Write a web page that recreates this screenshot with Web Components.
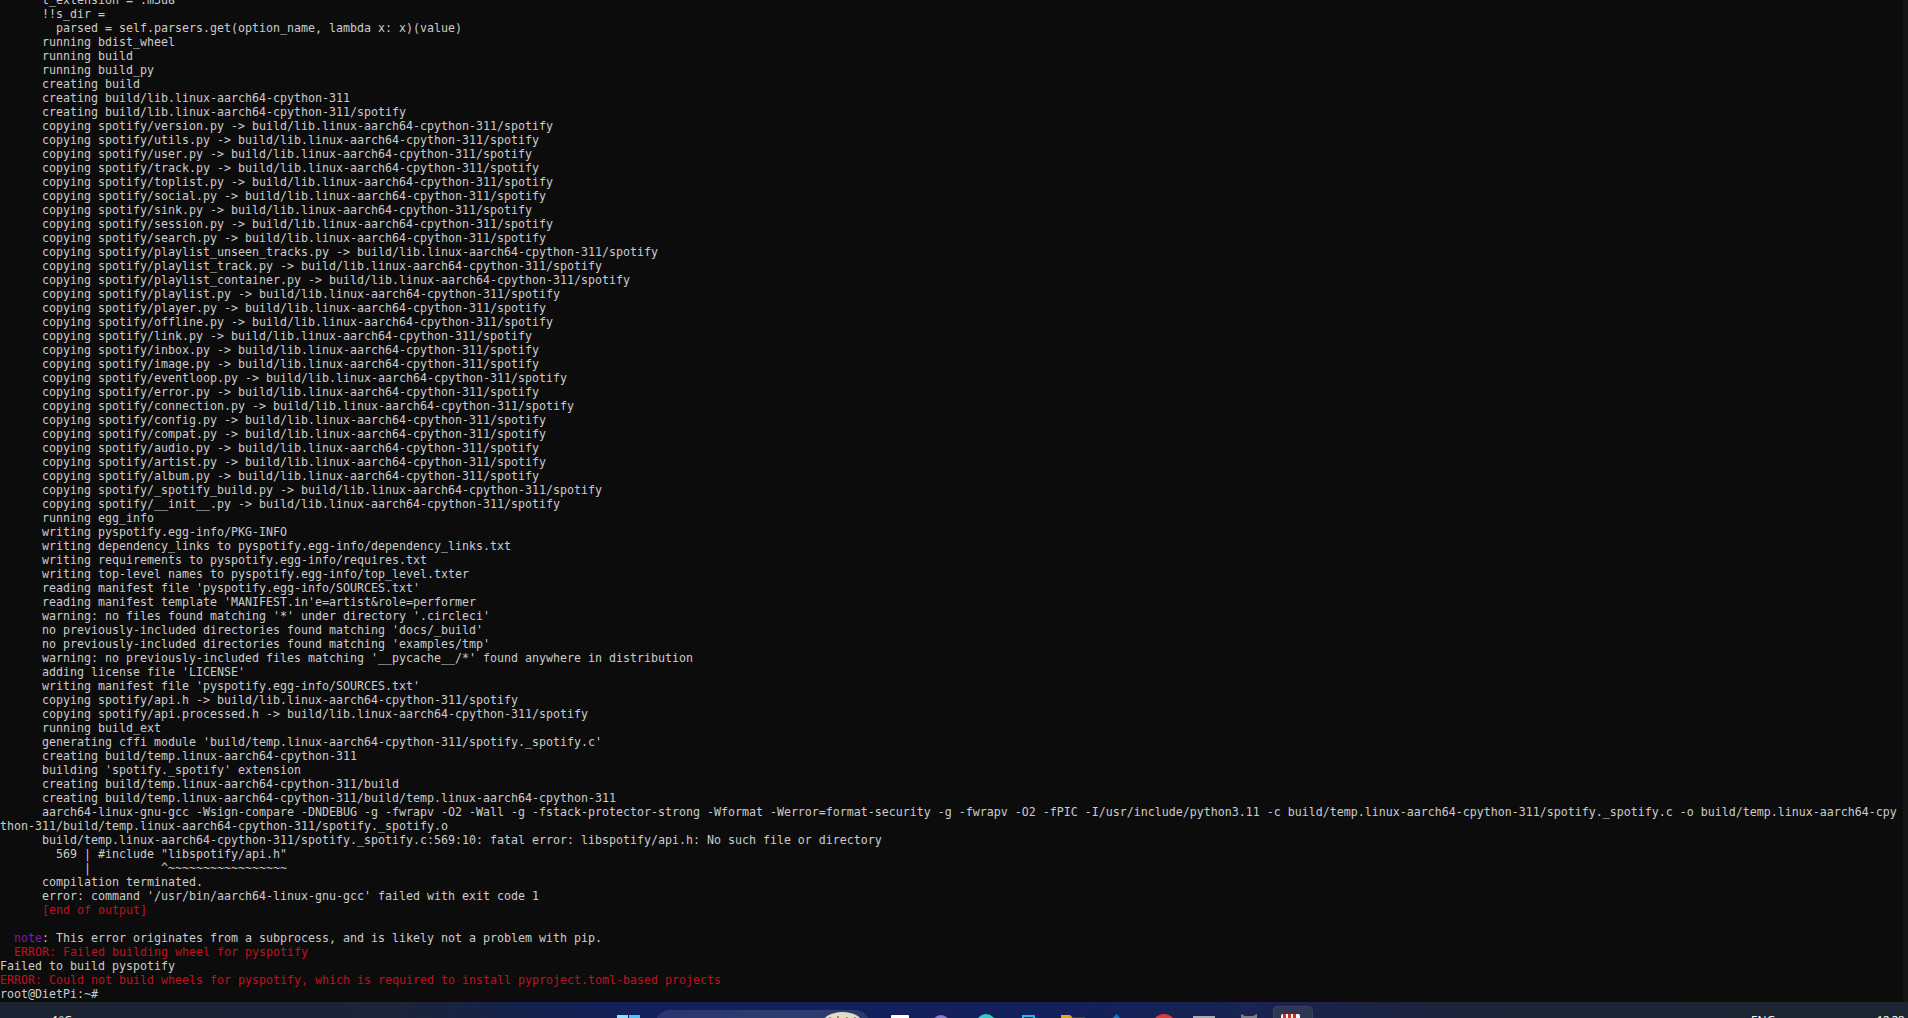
<!DOCTYPE html>
<html lang="en">
<head>
<meta charset="utf-8">
<title>root@DietPi: ~</title>
<style>
  html, body { margin: 0; height: 100%; background: #0c0c0c; overflow: hidden; }
  body { display: flex; flex-direction: column; }
</style>
</head>
<body>
<term-window>
<term-line>      t_extension = .m3u8</term-line>
<term-line>      !!s_dir =</term-line>
<term-line>        parsed = self.parsers.get(option_name, lambda x: x)(value)</term-line>
<term-line>      running bdist_wheel</term-line>
<term-line>      running build</term-line>
<term-line>      running build_py</term-line>
<term-line>      creating build</term-line>
<term-line>      creating build/lib.linux-aarch64-cpython-311</term-line>
<term-line>      creating build/lib.linux-aarch64-cpython-311/spotify</term-line>
<term-line>      copying spotify/version.py -> build/lib.linux-aarch64-cpython-311/spotify</term-line>
<term-line>      copying spotify/utils.py -> build/lib.linux-aarch64-cpython-311/spotify</term-line>
<term-line>      copying spotify/user.py -> build/lib.linux-aarch64-cpython-311/spotify</term-line>
<term-line>      copying spotify/track.py -> build/lib.linux-aarch64-cpython-311/spotify</term-line>
<term-line>      copying spotify/toplist.py -> build/lib.linux-aarch64-cpython-311/spotify</term-line>
<term-line>      copying spotify/social.py -> build/lib.linux-aarch64-cpython-311/spotify</term-line>
<term-line>      copying spotify/sink.py -> build/lib.linux-aarch64-cpython-311/spotify</term-line>
<term-line>      copying spotify/session.py -> build/lib.linux-aarch64-cpython-311/spotify</term-line>
<term-line>      copying spotify/search.py -> build/lib.linux-aarch64-cpython-311/spotify</term-line>
<term-line>      copying spotify/playlist_unseen_tracks.py -> build/lib.linux-aarch64-cpython-311/spotify</term-line>
<term-line>      copying spotify/playlist_track.py -> build/lib.linux-aarch64-cpython-311/spotify</term-line>
<term-line>      copying spotify/playlist_container.py -> build/lib.linux-aarch64-cpython-311/spotify</term-line>
<term-line>      copying spotify/playlist.py -> build/lib.linux-aarch64-cpython-311/spotify</term-line>
<term-line>      copying spotify/player.py -> build/lib.linux-aarch64-cpython-311/spotify</term-line>
<term-line>      copying spotify/offline.py -> build/lib.linux-aarch64-cpython-311/spotify</term-line>
<term-line>      copying spotify/link.py -> build/lib.linux-aarch64-cpython-311/spotify</term-line>
<term-line>      copying spotify/inbox.py -> build/lib.linux-aarch64-cpython-311/spotify</term-line>
<term-line>      copying spotify/image.py -> build/lib.linux-aarch64-cpython-311/spotify</term-line>
<term-line>      copying spotify/eventloop.py -> build/lib.linux-aarch64-cpython-311/spotify</term-line>
<term-line>      copying spotify/error.py -> build/lib.linux-aarch64-cpython-311/spotify</term-line>
<term-line>      copying spotify/connection.py -> build/lib.linux-aarch64-cpython-311/spotify</term-line>
<term-line>      copying spotify/config.py -> build/lib.linux-aarch64-cpython-311/spotify</term-line>
<term-line>      copying spotify/compat.py -> build/lib.linux-aarch64-cpython-311/spotify</term-line>
<term-line>      copying spotify/audio.py -> build/lib.linux-aarch64-cpython-311/spotify</term-line>
<term-line>      copying spotify/artist.py -> build/lib.linux-aarch64-cpython-311/spotify</term-line>
<term-line>      copying spotify/album.py -> build/lib.linux-aarch64-cpython-311/spotify</term-line>
<term-line>      copying spotify/_spotify_build.py -> build/lib.linux-aarch64-cpython-311/spotify</term-line>
<term-line>      copying spotify/__init__.py -> build/lib.linux-aarch64-cpython-311/spotify</term-line>
<term-line>      running egg_info</term-line>
<term-line>      writing pyspotify.egg-info/PKG-INFO</term-line>
<term-line>      writing dependency_links to pyspotify.egg-info/dependency_links.txt</term-line>
<term-line>      writing requirements to pyspotify.egg-info/requires.txt</term-line>
<term-line>      writing top-level names to pyspotify.egg-info/top_level.txter</term-line>
<term-line>      reading manifest file 'pyspotify.egg-info/SOURCES.txt'</term-line>
<term-line>      reading manifest template 'MANIFEST.in'e=artist&amp;role=performer</term-line>
<term-line>      warning: no files found matching '*' under directory '.circleci'</term-line>
<term-line>      no previously-included directories found matching 'docs/_build'</term-line>
<term-line>      no previously-included directories found matching 'examples/tmp'</term-line>
<term-line>      warning: no previously-included files matching '__pycache__/*' found anywhere in distribution</term-line>
<term-line>      adding license file 'LICENSE'</term-line>
<term-line>      writing manifest file 'pyspotify.egg-info/SOURCES.txt'</term-line>
<term-line>      copying spotify/api.h -> build/lib.linux-aarch64-cpython-311/spotify</term-line>
<term-line>      copying spotify/api.processed.h -> build/lib.linux-aarch64-cpython-311/spotify</term-line>
<term-line>      running build_ext</term-line>
<term-line>      generating cffi module 'build/temp.linux-aarch64-cpython-311/spotify._spotify.c'</term-line>
<term-line>      creating build/temp.linux-aarch64-cpython-311</term-line>
<term-line>      building 'spotify._spotify' extension</term-line>
<term-line>      creating build/temp.linux-aarch64-cpython-311/build</term-line>
<term-line>      creating build/temp.linux-aarch64-cpython-311/build/temp.linux-aarch64-cpython-311</term-line>
<term-line>      aarch64-linux-gnu-gcc -Wsign-compare -DNDEBUG -g -fwrapv -O2 -Wall -g -fstack-protector-strong -Wformat -Werror=format-security -g -fwrapv -O2 -fPIC -I/usr/include/python3.11 -c build/temp.linux-aarch64-cpython-311/spotify._spotify.c -o build/temp.linux-aarch64-cpython-311/build/temp.linux-aarch64-cpython-311/spotify._spotify.o</term-line>
<term-line>      build/temp.linux-aarch64-cpython-311/spotify._spotify.c:569:10: fatal error: libspotify/api.h: No such file or directory</term-line>
<term-line>        569 | #include "libspotify/api.h"</term-line>
<term-line>            |          ^~~~~~~~~~~~~~~~~~</term-line>
<term-line>      compilation terminated.</term-line>
<term-line>      error: command '/usr/bin/aarch64-linux-gnu-gcc' failed with exit code 1</term-line>
<term-line tone="error">      [end of output]</term-line>
<term-line> </term-line>
<term-line>  <term-mark>note</term-mark>: This error originates from a subprocess, and is likely not a problem with pip.</term-line>
<term-line tone="error">  ERROR: Failed building wheel for pyspotify</term-line>
<term-line>Failed to build pyspotify</term-line>
<term-line tone="error">ERROR: Could not build wheels for pyspotify, which is required to install pyproject.toml-based projects</term-line>
<term-line>root@DietPi:~#</term-line>
</term-window>

<task-bar>
  <task-group slot="left" style="--gap:11px">
    <task-icon kind="weather"></task-icon>
    <task-label>1°C</task-label>
  </task-group>
  <task-group slot="center">
    <task-icon kind="windows"></task-icon>
    <task-search></task-search>
    <task-icon kind="notes"></task-icon>
    <task-icon kind="purple"></task-icon>
    <task-icon kind="teal"></task-icon>
    <task-icon kind="store"></task-icon>
    <task-icon kind="folder"></task-icon>
    <task-icon kind="diamond"></task-icon>
    <task-icon kind="red"></task-icon>
    <task-icon kind="window"></task-icon>
    <task-icon kind="cat"></task-icon>
    <task-icon kind="terminal"></task-icon>
  </task-group>
  <task-group slot="right" style="--gap:101px">
    <task-label>ENG</task-label>
    <task-label style="letter-spacing:-.6px">12:28</task-label>
  </task-group>
</task-bar>

<script>
class TermWindow extends HTMLElement {
  constructor() {
    super();
    const template = document.createElement('template');
    template.innerHTML = `
      <style>
        :host {
          display: grid;
          grid-template-columns: 1903px 5px;
          height: 1002px;
          flex: none;
          background: #0c0c0c;
          overflow: hidden;
        }
        .viewport { overflow: hidden; height: 1002px; }
        /* 271 columns at 7px, same as the console */
        .screen {
          width: 1898px;
          margin-top: -7px;
          font: 11.63px/14px "DejaVu Sans Mono", "Liberation Mono", monospace;
          color: #cccccc;
        }
        .scrollbar { background: #151515; }
      </style>
      <div class="viewport"><div class="screen"><slot></slot></div></div>
      <div class="scrollbar"></div>
    `;
    this.attachShadow({ mode: 'open' });
    this.shadowRoot.appendChild(template.content.cloneNode(true));
  }
}

class TermLine extends HTMLElement {
  constructor() {
    super();
    // no whitespace around the slot: the host keeps every space it gets
    const template = document.createElement('template');
    template.innerHTML = `<style>
        :host {
          display: block;
          min-height: 14px;
          white-space: pre-wrap;
          word-break: break-all;
        }
        :host([tone="error"]) { color: #c50f1f; }
      </style><slot></slot>`;
    this.attachShadow({ mode: 'open' });
    this.shadowRoot.appendChild(template.content.cloneNode(true));
  }
}

class TermMark extends HTMLElement {
  constructor() {
    super();
    this.attachShadow({ mode: 'open' }).innerHTML = `<style>:host { display: inline; color: #881798; }</style><slot></slot>`;
  }
}

class TaskBar extends HTMLElement {
  constructor() {
    super();
    const template = document.createElement('template');
    template.innerHTML = `
      <style>
        :host {
          display: flex;
          height: 16px;
          flex: none;
          overflow: hidden;
          align-items: flex-start;
          padding: 0 4px 0 35px;
          background: linear-gradient(90deg, #1b2332 0%, #1b2438 20%, #13205a 33%, #12205c 55%, #1a2350 66%, #1d2434 80%, #1d2532 100%);
          font: 12px/16px "Open Sans", "Liberation Sans", sans-serif;
          color: #ffffff;
        }
        .left { width: 582px; }
        .right { margin-left: auto; }
      </style>
      <div class="left"><slot name="left"></slot></div>
      <div class="center"><slot name="center"></slot></div>
      <div class="right"><slot name="right"></slot></div>
    `;
    this.attachShadow({ mode: 'open' });
    this.shadowRoot.appendChild(template.content.cloneNode(true));
  }
}

class TaskGroup extends HTMLElement {
  constructor() {
    super();
    this.attachShadow({ mode: 'open' }).innerHTML = `
      <style>:host { display: flex; align-items: flex-start; gap: var(--gap, 0); }</style><slot></slot>`;
  }
}

class TaskLabel extends HTMLElement {
  constructor() {
    super();
    this.attachShadow({ mode: 'open' }).innerHTML = `
      <style>:host { display: block; margin-top: 11px; white-space: nowrap; }</style><slot></slot>`;
  }
}

class TaskSearch extends HTMLElement {
  constructor() {
    super();
    this.attachShadow({ mode: 'open' }).innerHTML = `
      <style>
        :host {
          display: flex;
          justify-content: flex-end;
          box-sizing: border-box;
          width: 215px;
          height: 30px;
          margin: 8px 0 0 15px;
          padding: 2px 7px 0 0;
          border-radius: 15px;
          background: linear-gradient(90deg, #2b3570, #2d3d6e 60%, #2a3a68);
        }
        svg { display: block; }
      </style>
      <svg width="41" height="24" viewBox="0 0 41 24">
        <ellipse cx="20.5" cy="12" rx="20.5" ry="12" fill="#e6dcc4"/>
        <circle cx="8" cy="6" r="1" fill="#8a6f4a"/><circle cx="16" cy="5" r="1" fill="#8a6f4a"/>
        <circle cx="25" cy="6" r="1" fill="#8a6f4a"/><circle cx="33" cy="6" r="1" fill="#8a6f4a"/>
      </svg>`;
  }
}

// width, margin-left and top of each taskbar icon, with its full drawing (the bar cuts it off)
const TASK_ICONS = {
  weather: [6, 0, 15, '<circle cx="3" cy="4" r="3" fill="#a8804a"/>'],
  windows: [23, 0, 13, '<rect width="11" height="11" fill="#8be3fb"/><rect x="12" width="11" height="11" fill="#4cc4f6"/><rect y="12" width="11" height="11" fill="#4cc4f6"/><rect x="12" y="12" width="11" height="11" fill="#1fa0ee"/>'],
  notes: [18, 21, 13, '<rect width="18" height="20" rx="1" fill="#ffffff"/>'],
  purple: [18, 23, 13, '<circle cx="9" cy="9" r="9" fill="#8a7ccf"/>'],
  teal: [20, 26, 12, '<defs><linearGradient id="t" x1="0" x2="1"><stop offset="0" stop-color="#2fc6e0"/><stop offset="1" stop-color="#2ed6a0"/></linearGradient></defs><circle cx="10" cy="10" r="10" fill="url(#t)"/>'],
  store: [13, 26, 13, '<rect x="1" y="1" width="11" height="14" fill="none" stroke="#25b4f0" stroke-width="2"/>'],
  folder: [24, 26, 13, '<path d="M0 0h9l3 2h12v16H0z" fill="#4a4030"/><path d="M0 0h9l2 2v16H0z" fill="#e8a614"/>'],
  diamond: [13, 25, 12, '<path d="M6.5 0L13 7 6.5 14 0 7z" fill="#1177c8"/>'],
  red: [24, 29, 12, '<circle cx="12" cy="12" r="12" fill="#e23b35"/>'],
  window: [22, 17, 14, '<rect width="22" height="16" fill="#a9adb3"/><rect x="1" y="2" width="20" height="13" fill="#e6e7e9"/>'],
  cat: [16, 26, 12, '<path d="M0 0l4 2h8l4-2v16H0z" fill="#7d8186"/>'],
  terminal: [40, 16, 4, '<rect x=".5" y=".5" width="39" height="40" rx="4" fill="#2f3650" stroke="#3c4360"/><rect x="8" y="8" width="19" height="20" rx="1.5" fill="#f4f4f4"/><rect x="10" y="8" width="3" height="8" fill="#cc3322"/><rect x="15" y="8" width="3" height="8" fill="#cc3322"/><rect x="20" y="8" width="3" height="8" fill="#cc3322"/>'],
};

class TaskIcon extends HTMLElement {
  constructor() {
    super();
    this.attachShadow({ mode: 'open' });
  }

  connectedCallback() {
    const [w, left, top, art] = TASK_ICONS[this.getAttribute('kind')];
    this.shadowRoot.innerHTML = `
      <style>
        :host { display: block; flex: none; width: ${w}px; margin: ${top}px 0 0 ${left}px; }
        svg { display: block; overflow: visible; }
      </style>
      <svg width="${w}" height="24" viewBox="0 0 ${w} 24">${art}</svg>`;
  }
}

customElements.define('term-window', TermWindow);
customElements.define('term-line', TermLine);
customElements.define('term-mark', TermMark);
customElements.define('task-bar', TaskBar);
customElements.define('task-group', TaskGroup);
customElements.define('task-label', TaskLabel);
customElements.define('task-search', TaskSearch);
customElements.define('task-icon', TaskIcon);
</script>
</body>
</html>
